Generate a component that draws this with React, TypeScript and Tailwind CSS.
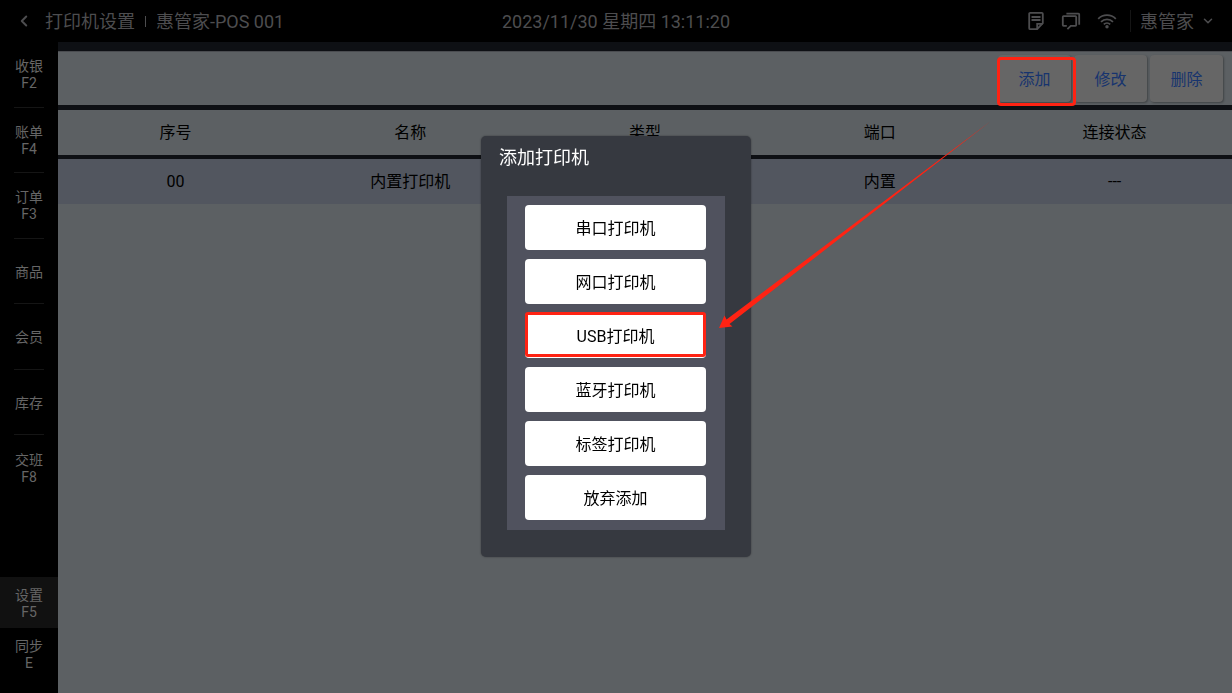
import { ChevronDown, ChevronLeft } from "lucide-react";

const navItems = [
  { label: "收银", hotkey: "F2" },
  { label: "账单", hotkey: "F4" },
  { label: "订单", hotkey: "F3" },
  { label: "商品" },
  { label: "会员" },
  { label: "库存" },
  { label: "交班", hotkey: "F8" },
];

const columns = ["序号", "名称", "类型", "端口", "连接状态"];

const printers = [["00", "内置打印机", "", "内置", "---"]];

const printerTypes = [
  "串口打印机",
  "网口打印机",
  "USB打印机",
  "蓝牙打印机",
  "标签打印机",
  "放弃添加",
];

const NoteIcon = () => (
  <svg width="18" height="20" viewBox="0 0 18 20" fill="none" stroke="currentColor" strokeWidth="1.8">
    <path d="M9.5 18.2H3.2a1 1 0 0 1-1-1V2.8a1 1 0 0 1 1-1h11.6a1 1 0 0 1 1 1v9.4l-5.6 6z" />
    <path d="M10.2 18v-5.2h5.4" />
    <path d="M4.5 6h9M4.5 9h9" />
  </svg>
);

const ChatIcon = () => (
  <svg width="20" height="20" viewBox="0 0 20 20" fill="none" stroke="currentColor" strokeWidth="1.8">
    <path d="M5.8 14.8H2.6a.8.8 0 0 1-.8-.8V6a.8.8 0 0 1 .8-.8h11.8a.8.8 0 0 1 .8.8v8a.8.8 0 0 1-.8.8h-4.6l-3.4 3.4" />
    <path d="M5.4 2.6h12a.8.8 0 0 1 .8.8v10.4" />
  </svg>
);

const WifiIcon = () => (
  <svg width="20" height="20" viewBox="0 0 20 20" fill="none" stroke="currentColor" strokeWidth="1.8">
    <path d="M1.2 7.8a12.6 12.6 0 0 1 17.6 0" />
    <path d="M4 10.8a8.6 8.6 0 0 1 12 0" />
    <path d="M6.8 13.4a4.6 4.6 0 0 1 6.4 0" />
    <circle cx="10" cy="15.8" r="1.7" fill="currentColor" stroke="none" />
  </svg>
);

const TopBar = () => (
  <header className="grid h-[42px] grid-cols-[1fr_auto_1fr] items-center bg-black text-[18px] text-[#4d4d4f]">
    <div className="flex items-center pl-[15px]">
      <button aria-label="返回" className="flex w-[30px] items-center">
        <ChevronLeft className="h-[18px] w-[18px]" strokeWidth={2.6} />
      </button>
      <h1>打印机设置</h1>
      <span className="mx-[10px] h-[11px] w-px bg-[#4d4d4f]" />
      <span>惠管家-POS 001</span>
    </div>

    <time>2023/11/30 星期四 13:11:20</time>

    <div className="flex items-center justify-end pr-[17px]">
      <div className="flex items-center gap-4">
        <NoteIcon />
        <ChatIcon />
        <WifiIcon />
      </div>
      <span className="ml-[13px] mr-[9px] h-[22px] w-px bg-[#151515]" />
      <button className="flex items-center gap-[7px]">
        惠管家
        <ChevronDown className="h-[14px] w-[14px]" strokeWidth={2.6} />
      </button>
    </div>
  </header>
);

const NavButton = ({ label, hotkey = "" }) => (
  <button className="flex w-full flex-1 flex-col items-center justify-center pt-[2px] text-[14px] leading-[17px]">
    <span>{label}</span>
    {hotkey && <span>{hotkey}</span>}
  </button>
);

const Sidebar = () => (
  <nav className="flex w-[58px] shrink-0 flex-col justify-between bg-black pb-[13px] text-[#666]">
    <ul className="flex h-[459px] flex-col">
      {navItems.map((item, i) => (
        <li key={item.label} className="flex flex-1 flex-col items-center">
          <NavButton label={item.label} hotkey={item.hotkey} />
          {i < navItems.length - 1 && <span className="h-px w-[30px] bg-[#151515]" />}
        </li>
      ))}
    </ul>
    <ul>
      <li className="flex h-[51px] bg-[#111]">
        <NavButton label="设置" hotkey="F5" />
      </li>
      <li className="flex h-[52px]">
        <NavButton label="同步" hotkey="E" />
      </li>
    </ul>
  </nav>
);

const toolButton =
  "relative h-[47px] w-[73px] rounded-[4px] bg-[#666] pt-[2px] text-[16px] text-[#17346e] shadow-[1px_1px_2px_rgba(0,0,0,0.3)]";

const Toolbar = () => (
  <div className="flex h-[54px] items-center justify-end gap-[3px] border-t border-[#4a4c50] bg-[#5c6063] pr-[9px]">
    <button className={toolButton}>
      添加
      {/* Highlight frame */}
      <span className="pointer-events-none absolute -bottom-[4px] -left-px -right-[5px] top-[2px] z-10 rounded-[4px] border-[3px] border-[#ff2313]" />
    </button>
    <button className={toolButton}>修改</button>
    <button className={toolButton}>删除</button>
  </div>
);

const PrinterTable = () => (
  <table className="mt-[5px] w-full table-fixed border-separate border-spacing-0 text-center text-[16px] text-black">
    <thead>
      <tr className="h-[49px] bg-[#5c6063]">
        {columns.map((name) => (
          <th key={name} className="border-b-[4px] border-[#0e1014] p-0 font-normal">
            {name}
          </th>
        ))}
      </tr>
    </thead>
    <tbody>
      {printers.map((row) => (
        <tr key={row[0]} className="h-[45px] bg-[#52565f]">
          {row.map((cell, i) => (
            <td key={i} className="p-0">
              {cell}
            </td>
          ))}
        </tr>
      ))}
    </tbody>
  </table>
);

const AddPrinterDialog = () => (
  <div className="fixed inset-0 z-20 flex items-center justify-center">
    <div
      role="dialog"
      aria-labelledby="dialog-title"
      className="w-[270px] rounded-[5px] bg-[#363940] pb-[27px] shadow-[0_0_2px_rgba(0,0,0,0.4)]"
    >
      <h2 id="dialog-title" className="h-[60px] pl-[18px] pt-[8px] text-[18px] leading-[27px] text-white">
        添加打印机
      </h2>
      <div className="mx-[26px] flex flex-col gap-[9px] bg-[#50525e] pb-[10px] pl-[18px] pr-[19px] pt-[9px]">
        {printerTypes.map((type) => (
          <button
            key={type}
            className="relative h-[45px] rounded-[4px] bg-white pt-[2px] text-[16px] text-black"
          >
            {type}
            {type === "USB打印机" && (
              <span className="pointer-events-none absolute -top-px bottom-px left-0 right-0 rounded-[3px] border-[3px] border-[#ff2313]" />
            )}
          </button>
        ))}
      </div>
    </div>

    {/* Arrow from the add button to the USB option */}
    <svg
      className="pointer-events-none absolute inset-0 h-full w-full"
      viewBox="0 0 1232 693"
      fill="#ff2313"
    >
      <path d="M991 121L726.5 319.5L724.5 315.5L719 328L732.5 326.5L729.5 324Z" />
    </svg>
  </div>
);

const App = () => {
  return (
    <div className="flex min-h-screen flex-col bg-black font-[Roboto,'Noto_Sans_CJK_SC',sans-serif]">
      <TopBar />
      <div className="flex flex-1">
        <Sidebar />
        <main className="flex min-w-0 flex-1 flex-col bg-[#0e1014] pt-[9px]">
          <Toolbar />
          <PrinterTable />
          <div className="flex-1 bg-[#5c6063]" />
        </main>
      </div>
      <AddPrinterDialog />
    </div>
  );
};

export default App;
